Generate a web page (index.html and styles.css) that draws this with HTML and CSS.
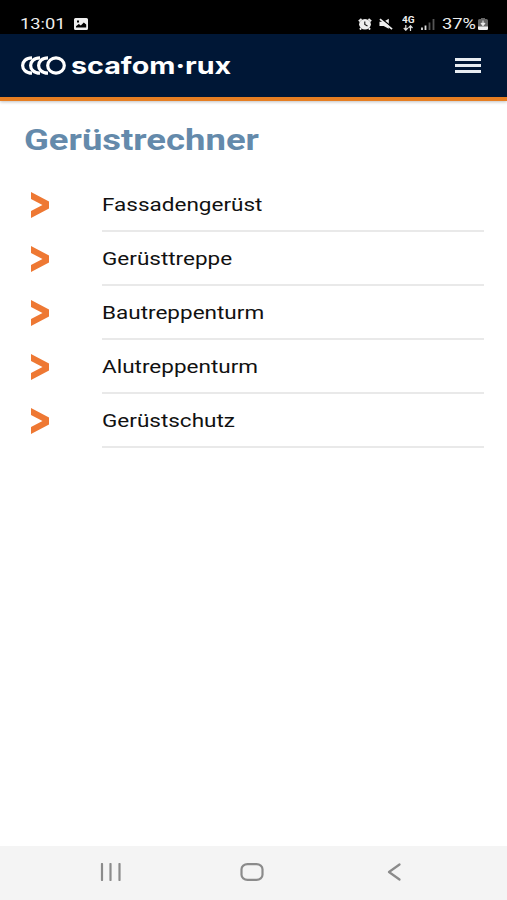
FILE: index.html
```html
<!DOCTYPE html>
<html lang="de">
<head>
    <meta charset="UTF-8">
    <meta name="viewport" content="width=device-width, initial-scale=1.0">
    <title>Gerüstrechner</title>
    <link rel="stylesheet" href="styles.css">
</head>
<body>
    <div class="statusbar">
        <span class="clock"><span class="wide">13:01</span></span>
        <svg class="icon-image" viewBox="0 0 14 12">
            <path fill="#eee" fill-rule="evenodd" d="M1.500 0h11Q14 0 14 1.500v9Q14 12 12.500 12h-11Q0 12 0 10.500v-9Q0 0 1.500 0zM2 9.500h10.200V6.500L9.800 4.500 6.800 7.500 4.800 6 2 8.300zM3 2.500v2h2v-2z"/>
        </svg>
        <div class="status-right">
            <svg class="icon-alarm" viewBox="0 0 14 12">
                <path d="M.8 3.200L3.500.9M13.200 3.200L10.500.9M3.200 10.300L1.800 11.500M10.800 10.300l1.400 1.200" stroke="#eee" stroke-width="1.800"/>
                <ellipse cx="7" cy="6.300" rx="5.900" ry="5.300" fill="#eee"/>
                <path d="M6.800 3.500v3l2.700 1.500" fill="none" stroke="#111" stroke-width="1.100"/>
            </svg>
            <svg class="icon-mute" viewBox="0 0 15 12">
                <path d="M.5 3.500h4.500L10.500.5v10.500L5 8.200H.5z" fill="#eee"/>
                <path d="M2.500 0L15 10.500" stroke="#000" stroke-width="1.500"/>
                <path d="M1 .8l13 10.700" stroke="#eee" stroke-width="1.900"/>
            </svg>
            <span class="network">
                <span class="network-type"><span class="wide">4G</span></span>
                <svg viewBox="0 0 10 6"><path d="M2.800 0v5M.8 3l2 2.200 2-2.200M7.500 6V1M5.500 3l2-2.200 2 2.200" fill="none" stroke="#ddd" stroke-width="1.200"/></svg>
            </span>
            <svg class="icon-signal" viewBox="0 0 14 12">
                <path d="M1 9.500V12M4.500 7.500V12" stroke="#ddd" stroke-width="1.800"/>
                <path d="M8.500 4.500V12M12.500 1V12" stroke="#555" stroke-width="1.800"/>
            </svg>
            <span class="percent"><span class="wide">37%</span></span>
            <svg class="icon-battery" viewBox="0 0 10 12">
                <path d="M3 0h4v1h1.500Q10 1 10 2.500v8Q10 12 8.500 12h-7Q0 12 0 10.500v-8Q0 1 1.500 1H3z" fill="#666"/>
                <path d="M0 8.500h10v2Q10 12 8.500 12h-7Q0 12 0 10.500z" fill="#eee"/>
                <path d="M5 2.500v4M3 5.300l2 2.500L7 5.300z" fill="#eee" stroke="#eee"/>
            </svg>
        </div>
    </div>

    <header class="header">
        <div class="logo">
            <svg class="logo-rings" viewBox="0 0 45 19">
                <g fill="none" stroke="#fff" stroke-width="3.200">
                    <path d="M11 1.800C-1.500 1.800-1.500 17.200 11 17.200"/>
                    <path d="M19 1.800C6.500 1.800 6.500 17.200 19 17.200"/>
                    <path d="M27 1.800C14.500 1.800 14.500 17.200 27 17.200"/>
                    <ellipse cx="35" cy="9.500" rx="8.300" ry="7.700"/>
                </g>
            </svg>
            <span class="logo-name">scafom·rux</span>
        </div>
        <div class="menu">
            <span></span>
            <span></span>
            <span></span>
        </div>
    </header>

    <main class="content">
        <h1><span class="wide">Gerüstrechner</span></h1>
        <ul class="list">
            <li>
                <svg class="arrow" viewBox="0 0 18 26"><path d="M0 0l18 9.500v7L0 26v-7L11.500 13 0 7z"/></svg>
                <a class="item"><span class="wide">Fassadengerüst</span></a>
            </li>
            <li>
                <svg class="arrow" viewBox="0 0 18 26"><path d="M0 0l18 9.500v7L0 26v-7L11.500 13 0 7z"/></svg>
                <a class="item"><span class="wide">Gerüsttreppe</span></a>
            </li>
            <li>
                <svg class="arrow" viewBox="0 0 18 26"><path d="M0 0l18 9.500v7L0 26v-7L11.500 13 0 7z"/></svg>
                <a class="item"><span class="wide">Bautreppenturm</span></a>
            </li>
            <li>
                <svg class="arrow" viewBox="0 0 18 26"><path d="M0 0l18 9.500v7L0 26v-7L11.500 13 0 7z"/></svg>
                <a class="item"><span class="wide">Alutreppenturm</span></a>
            </li>
            <li>
                <svg class="arrow" viewBox="0 0 18 26"><path d="M0 0l18 9.500v7L0 26v-7L11.500 13 0 7z"/></svg>
                <a class="item"><span class="wide">Gerüstschutz</span></a>
            </li>
        </ul>
    </main>

    <nav class="navbar">
        <svg class="nav-recent" viewBox="0 0 22 18"><path d="M2 1v16M10.500 1v16M19.500 1v16"/></svg>
        <svg class="nav-home" viewBox="0 0 24 18"><rect x="1.500" y="1.200" width="21" height="15.600" rx="6" ry="5"/></svg>
        <svg class="nav-back" viewBox="0 0 14 18"><path d="M12.500 1.500L2 9l10.500 7.500"/></svg>
    </nav>
</body>
</html>
```

FILE: styles.css
```css
* {
    margin: 0;
    padding: 0;
    box-sizing: border-box;
}

body {
    font-family: Roboto, 'Liberation Sans', sans-serif;
    background: #fff;
    height: 100vh;
    display: flex;
    flex-direction: column;
    color: #111;
    overflow: hidden;
}

svg {
    display: block;
    flex: none;
}

.wide {
    display: inline-block;
    transform: scaleX(1.215);
    transform-origin: left center;
    white-space: nowrap;
}

/* status bar */
.statusbar {
    height: 34px;
    flex: none;
    display: flex;
    align-items: center;
    padding: 13px 19px 0 20px;
    background: #000;
    color: #eee;
    font-size: 15.5px;
    line-height: 20px;
}

.clock {
    width: 54px;
}

.statusbar .wide {
    transform: scaleX(1.18);
}

.icon-image {
    width: 14px;
    height: 12px;
}

.status-right {
    margin-left: auto;
    display: flex;
    align-items: center;
}

.icon-alarm {
    width: 14px;
    height: 12px;
    margin-right: 7px;
}

.icon-mute {
    width: 14px;
    height: 12px;
    margin-right: 9px;
}

.network {
    width: 12px;
    margin-right: 7px;
}

.network-type {
    display: block;
    font-size: 8.5px;
    font-weight: 700;
    line-height: 7px;
}

.network svg {
    width: 12px;
    height: 6px;
    margin-top: 1px;
}

.icon-signal {
    width: 14px;
    height: 12px;
    margin-right: 7px;
}

.percent {
    width: 36px;
}

.icon-battery {
    width: 10px;
    height: 12px;
}

/* header */
.header {
    height: 67px;
    flex: none;
    display: flex;
    align-items: center;
    justify-content: space-between;
    padding: 0 26px 0 21px;
    background: #001736;
    border-bottom: 4px solid #e67e22;
    box-shadow: 0 1px 3px rgba(0, 0, 0, 0.25);
}

.logo {
    display: flex;
    align-items: center;
}

.logo-rings {
    width: 45px;
    height: 19px;
    margin-right: 5px;
}

.logo-name {
    color: #fff;
    font-family: Inter, Roboto, sans-serif;
    font-size: 23.5px;
    font-weight: 700;
    line-height: 28px;
    transform: scaleX(1.22);
    transform-origin: left center;
}

.menu {
    width: 26px;
    display: flex;
    flex-direction: column;
    gap: 3px;
}

.menu span {
    height: 3px;
    background: #e8edf2;
}

/* content */
.content {
    flex: 1;
    padding: 20px 23px 0 24px;
}

h1 {
    color: #648aab;
    font-size: 30px;
    font-weight: 700;
    line-height: 38px;
    margin-bottom: 19px;
}

.list {
    list-style: none;
}

.list li {
    height: 54px;
    display: flex;
    align-items: center;
    padding-left: 7px;
}

.arrow {
    width: 18px;
    height: 26px;
    margin-right: 53px;
    fill: #ee7833;
}

.item {
    flex: 1;
    height: 54px;
    border-bottom: 2px solid #e9e9e9;
    font-size: 18px;
    line-height: 54px;
}

.item .wide {
    transform: scaleX(1.25);
}

/* bottom navigation */
.navbar {
    height: 54px;
    flex: none;
    display: flex;
    align-items: center;
    justify-content: space-between;
    padding: 0 106px 3px 100px;
    background: #f4f4f4;
}

.navbar svg {
    fill: none;
    stroke: #8b8b8b;
    stroke-width: 2.2;
    stroke-linecap: round;
    stroke-linejoin: round;
}

.nav-recent {
    width: 22px;
    height: 18px;
}

.nav-home {
    width: 24px;
    height: 18px;
    margin-right: 5px;
}

.nav-back {
    width: 14px;
    height: 18px;
}
```
